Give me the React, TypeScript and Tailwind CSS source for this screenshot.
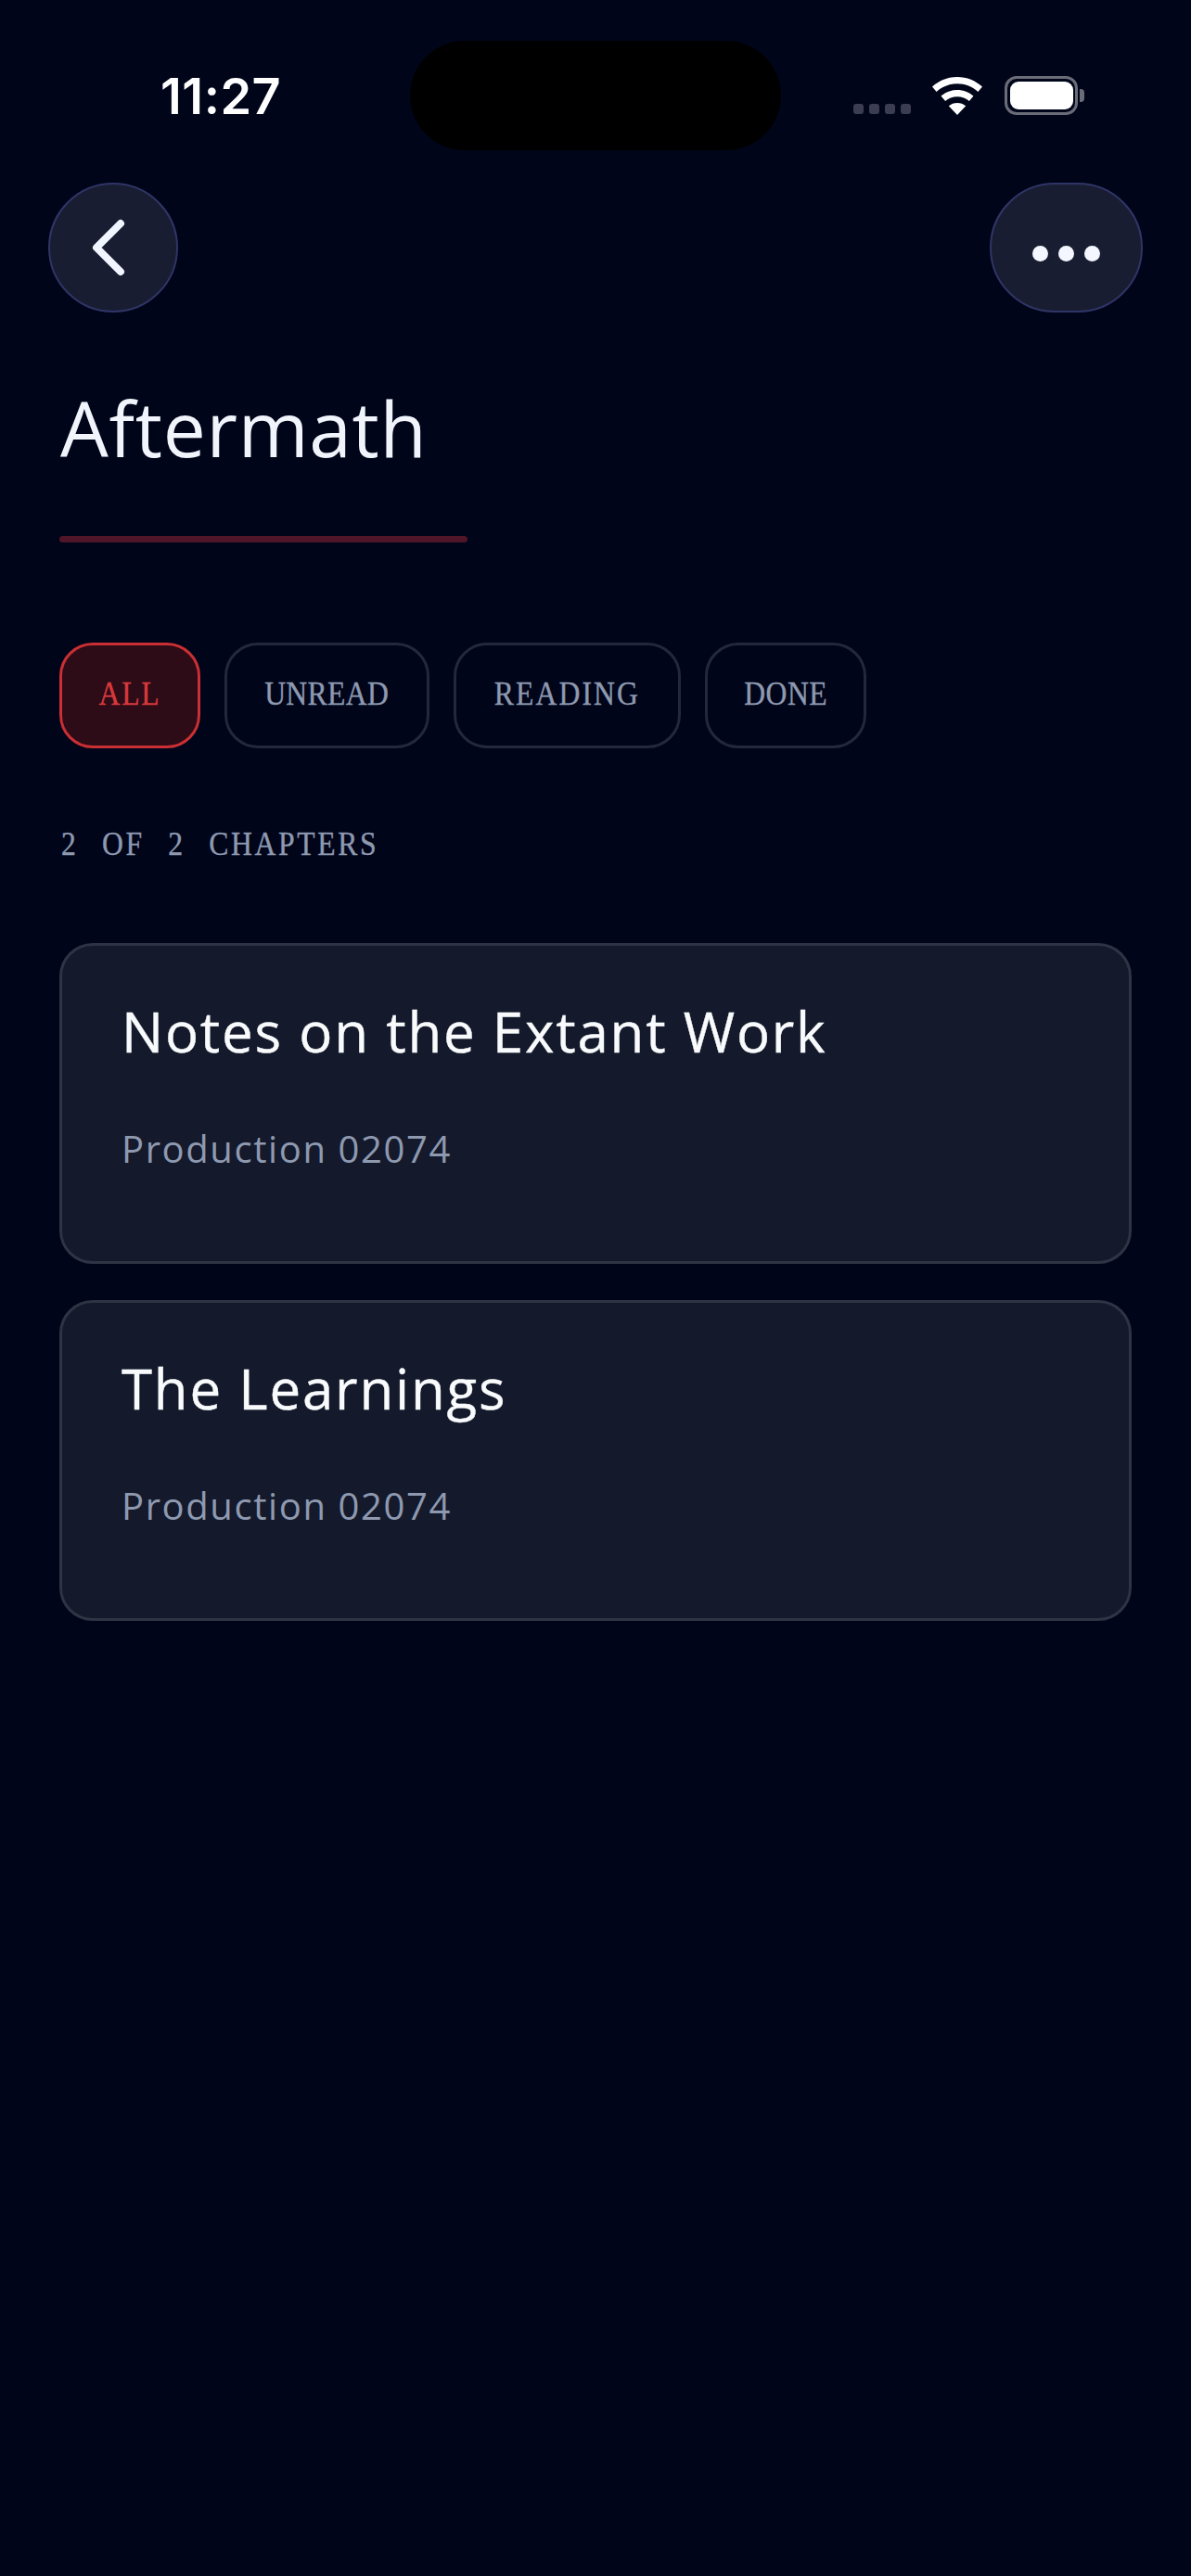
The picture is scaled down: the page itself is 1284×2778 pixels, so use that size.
export default function App() {
  const sans = "font-['Open_Sans','Noto_Sans',sans-serif]";
  const mono = "font-['Liberation_Serif',serif]";
  const chips = [
    { label: "ALL", active: true, w: "w-[152px]", t: "tracking-[2px]" },
    { label: "UNREAD", active: false, w: "w-[221px]", t: "tracking-[0.4px]" },
    { label: "READING", active: false, w: "w-[245px]", t: "tracking-[2.4px]" },
    { label: "DONE", active: false, w: "w-[174px]", t: "tracking-[0.6px]" },
  ];
  const chapters = ["Notes on the Extant Work", "The Learnings"];
  return (
    <div className={`min-h-[2778px] w-[1284px] bg-[#00051a] ${sans}`}>
      <div className="flex items-start pt-[44px] pl-[173px]">
        <div className="mt-[28px] w-[128px] font-['Inter',sans-serif] text-[54px] leading-[64px] font-semibold tracking-[0.5px] whitespace-nowrap text-white">
          11:27
        </div>
        <div className="ml-[141px] h-[118px] w-[400px] rounded-[59px] bg-black" />
        <div className="mt-[68px] ml-[78px] flex gap-[6px]">
          {[0, 1, 2, 3].map((i) => (
            <div key={i} className="h-[11px] w-[11px] rounded-[3px] bg-[#3b3e50]" />
          ))}
        </div>
        <svg className="mt-[39px] ml-[23px]" width="54" height="41" viewBox="0 0 54 41">
          <path
            d="M27 0C16.6 0 7.2 4 0 10.6l4.6 5.4C10.6 10.5 18.4 7.2 27 7.2s16.4 3.3 22.4 8.8L54 10.6C46.800 4 37.400 0 27 0Z"
            fill="#fff"
          />
          <path
            d="M27 14c-6.700 0-12.800 2.500-17.500 6.600l4.600 5.400c3.400-3 8-4.800 12.900-4.800s9.500 1.800 12.900 4.800l4.600-5.400C39.800 16.500 33.700 14 27 14Z"
            fill="#fff"
          />
          <path d="M27 28c-3.500 0-6.700 1.200-9.200 3.300L27 41l9.200-9.700C33.700 29.200 30.500 28 27 28Z" fill="#fff" />
        </svg>
        <div className="mt-[38px] ml-[24px] flex items-center">
          <div className="flex h-[42px] w-[79px] items-center justify-center rounded-[13px] border-[3px] border-[#6a6c78]">
            <div className="h-[30px] w-[68px] rounded-[9px] bg-white" />
          </div>
          <div className="ml-[2px] h-[14px] w-[5px] rounded-r-[4px] bg-[#6a6c78]" />
        </div>
      </div>

      <div className="mt-[35px] flex items-center justify-between px-[52px]">
        <button className="flex h-[140px] w-[140px] items-center justify-center rounded-full border-[2px] border-[#2f3566] bg-[#181d31]">
          <svg width="36" height="62" viewBox="0 0 36 62" className="mr-[10px]" fill="none">
            <path d="M31 5 5 31l26 26" stroke="#f1f5ff" strokeWidth="8" strokeLinecap="round" strokeLinejoin="round" />
          </svg>
        </button>
        <button className="flex h-[140px] w-[165px] items-center justify-center gap-[11px] rounded-[70px] border-[2px] border-[#2f3566] bg-[#181d31] pt-[12px]">
          <span className="h-[17px] w-[17px] rounded-full bg-[#f4f7ff]" />
          <span className="h-[17px] w-[17px] rounded-full bg-[#f4f7ff]" />
          <span className="h-[17px] w-[17px] rounded-full bg-[#f4f7ff]" />
        </button>
      </div>

      <div className="px-[64px]">
        <h1 className="mt-[68px] ml-[1px] text-[82px] leading-[112px] font-normal tracking-[0.7px] whitespace-nowrap text-[#f1f5fb]">Aftermath</h1>
        <div className="mt-[61px] h-[7px] w-[440px] rounded-full bg-[#4f1528]" />

        <div className="mt-[108px] flex gap-[26px]">
          {chips.map((c) => (
            <div
              key={c.label}
              className={`flex h-[114px] items-center justify-center rounded-[36px] border-[3px] ${c.w} ${
                c.active ? "border-[#c92f33] bg-[#2d0b17] text-[#d8393b]" : "border-[#23283a] text-[#8e99b0]"
              }`}
            >
              <span className={`inline-block -translate-y-[2px] scale-x-[0.88] text-[36px] [-webkit-text-stroke:0.4px] ${c.t} ${mono}`}>{c.label}</span>
            </div>
          ))}
        </div>

        <div
          className={`mt-[78px] ml-[2px] origin-left scale-x-[0.88] text-[36px] leading-[50px] tracking-[3px] [word-spacing:17px] [-webkit-text-stroke:0.4px] whitespace-nowrap text-[#8e99b0] ${mono}`}
        >
          2 OF 2 CHAPTERS
        </div>

        <div className="mt-[82px] flex flex-col gap-[39px]">
          {chapters.map((t) => (
            <div key={t} className="h-[346px] w-[1156px] rounded-[36px] border-[3px] border-[#2f3444] bg-[#141a2c] px-[64px] pt-[50px]">
              <div className="text-[60px] leading-[84px] tracking-[1.800px] [-webkit-text-stroke:0.4px] whitespace-nowrap text-[#f8fafc]">{t}</div>
              <div className="mt-[57px] text-[40px] leading-[56px] tracking-[1.600px] whitespace-nowrap text-[#8e99b0]">Production 02074</div>
            </div>
          ))}
        </div>
      </div>
    </div>
  );
}
